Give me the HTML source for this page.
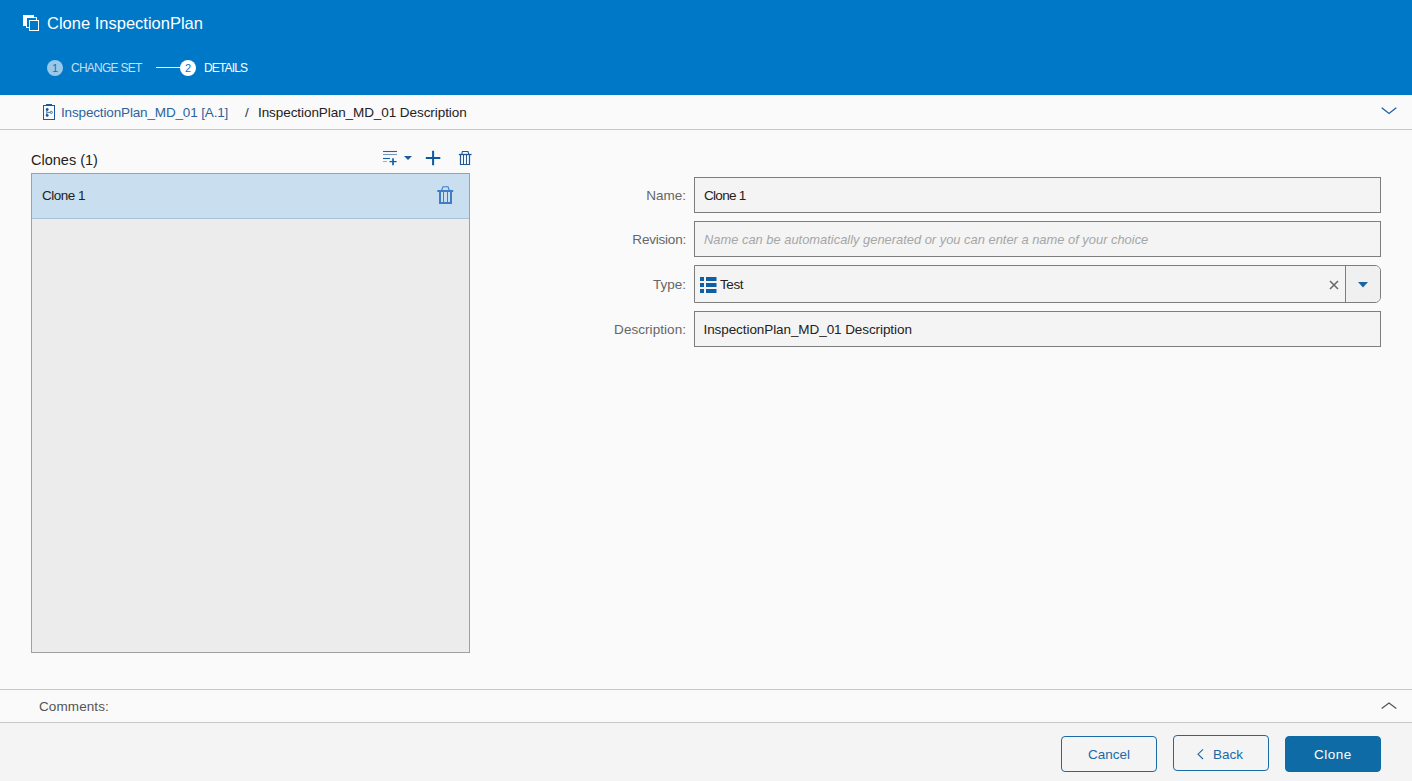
<!DOCTYPE html>
<html><head><meta charset="utf-8">
<style>
*{box-sizing:border-box;margin:0;padding:0}
html,body{width:1412px;height:781px;overflow:hidden;background:#fafafa;font-family:"Liberation Sans",sans-serif}
.a{position:absolute;white-space:nowrap;line-height:1}
#hdr{position:absolute;left:0;top:0;width:1412px;height:95px;background:#0078c8}
#crumb{position:absolute;left:0;top:95px;width:1412px;height:35px;background:#fafafa;border-bottom:1px solid #c8c8c8}
#list{position:absolute;left:31px;top:173px;width:439px;height:480px;background:#ececec;border:1px solid #a0a0a0}
#sel{position:absolute;left:0;top:0;width:437px;height:45px;background:#c9dfef;border-bottom:1px solid #a9c4da}
.inp{position:absolute;left:694px;width:687px;height:36px;background:#f4f4f4;border:1px solid #7d7d7d}
.lbl{position:absolute;right:726px;font-size:13.5px;color:#666;line-height:1;white-space:nowrap}
#cmt{position:absolute;left:0;top:689px;width:1412px;height:34px;border-top:1px solid #c8c8c8;border-bottom:1px solid #c8c8c8;background:#fafafa}
#ftr{position:absolute;left:0;top:723px;width:1412px;height:58px;background:#f4f4f4}
.btn{position:absolute;top:736px;width:96px;height:36px;border:1px solid #1a6aa6;border-radius:4px;background:#f4f4f4}
</style></head><body>
<div id="hdr">
  <svg class="a" style="left:22px;top:14px" width="19" height="18" viewBox="0 0 19 18">
    <rect x="1" y="1" width="11" height="11" fill="#fff"/>
    <rect x="4.5" y="3.5" width="10" height="10" fill="#0078c8" stroke="#fff" stroke-width="1"/>
    <rect x="7.5" y="6.5" width="9" height="10" fill="#0078c8" stroke="#fff" stroke-width="1"/>
  </svg>
  <div class="a" style="left:47px;top:14.7px;font-size:16.5px;color:#fff">Clone InspectionPlan</div>
  <div class="a" style="left:47px;top:60px;width:16px;height:16px;border-radius:50%;background:rgba(255,255,255,.6)"></div>
  <div class="a" style="left:47px;top:63px;width:16px;font-size:11px;text-align:center;color:#0078c8">1</div>
  <div class="a" style="left:71px;top:62.2px;font-size:12px;letter-spacing:-0.75px;color:rgba(255,255,255,.78)">CHANGE SET</div>
  <div class="a" style="left:156px;top:67px;width:26px;height:1px;background:#fff"></div>
  <div class="a" style="left:180px;top:60px;width:16px;height:16px;border-radius:50%;background:#fff"></div>
  <div class="a" style="left:180px;top:63px;width:16px;font-size:11px;text-align:center;color:#0078c8">2</div>
  <div class="a" style="left:204px;top:61.7px;font-size:12px;letter-spacing:-0.85px;color:#fff">DETAILS</div>
</div>
<div id="crumb">
  <svg class="a" style="left:43px;top:9px" width="13" height="17" viewBox="0 0 13 17">
    <rect x="0.5" y="1.5" width="11" height="14" fill="none" stroke="#1e5a9a" stroke-width="1"/>
    <rect x="3" y="0" width="6" height="1.5" fill="#1e5a9a"/>
    <circle cx="4.2" cy="5.5" r="1.4" fill="#1e5a9a"/><circle cx="4.2" cy="11.4" r="1.4" fill="#1e5a9a"/>
    <path d="M3.8 5.5V11.4M4.2 8.4H7.2" stroke="#1e5a9a" stroke-width="0.8" fill="none"/>
    <circle cx="8.3" cy="8.4" r="1.1" fill="none" stroke="#1e5a9a" stroke-width="0.8"/>
  </svg>
  <div class="a" style="left:61px;top:10.5px;font-size:13.5px;letter-spacing:-0.15px;color:#2a64a0">InspectionPlan_MD_01 [A.1]</div>
  <div class="a" style="left:245px;top:10.5px;font-size:13.5px;color:#333">/</div>
  <div class="a" style="left:258px;top:10.5px;font-size:13.5px;letter-spacing:-0.07px;color:#222">InspectionPlan_MD_01 Description</div>
  <svg class="a" style="left:1381px;top:12px" width="16" height="9" viewBox="0 0 16 9"><path d="M0.7 0.8L8 6.5L15.3 0.8" fill="none" stroke="#1d5fa8" stroke-width="1.3"/></svg>
</div>
<div class="a" style="left:31px;top:153px;font-size:14.5px;color:#222">Clones (1)</div>
<svg class="a" style="left:382px;top:150px" width="32" height="16" viewBox="0 0 32 16">
  <path d="M1 1.5H15" stroke="#3f5797" stroke-width="1.1"/><path d="M1 4.5H15" stroke="#7d93c0" stroke-width="1.1"/><path d="M1 8.5H8" stroke="#1060a8" stroke-width="1.1"/><path d="M1 11.5H5" stroke="#aab0ba" stroke-width="1.1"/><path d="M7.5 11.6H14.6" stroke="#1060a8" stroke-width="1.3"/><path d="M11 8.2V15.2" stroke="#1060a8" stroke-width="1.7"/>
  <path d="M22 6H30L26 10Z" fill="#1e5a9a"/>
</svg>
<svg class="a" style="left:425px;top:150px" width="16" height="16" viewBox="0 0 16 16"><path d="M0.8 8H15.3M8.1 0.8V15.2" fill="none" stroke="#0c58a2" stroke-width="2"/></svg>
<svg class="a" style="left:458px;top:150px" width="15" height="16" viewBox="0 0 15 16">
  <path d="M0.9 4.5H13.6" stroke="#1e5a9a" stroke-width="1.3"/>
  <path d="M3.8 4.2L4.4 1.5H10L10.7 4.2" fill="none" stroke="#1e5a9a" stroke-width="1.1"/>
  <path d="M2.5 4.5V14.5H11.5V4.5" fill="none" stroke="#1e5a9a" stroke-width="1.2"/>
  <path d="M5.5 5V14M8.5 5V14" stroke="#1e5a9a" stroke-width="1"/>
</svg>
<div id="list">
  <div id="sel">
    <div class="a" style="left:10px;top:15px;font-size:13.5px;letter-spacing:-0.5px;color:#222">Clone 1</div>
    <svg class="a" style="left:405px;top:12px" width="17" height="19" viewBox="0 0 17 19">
      <path d="M0.3 5H16.2" stroke="#3f7dc8" stroke-width="2"/>
      <path d="M4.6 4.2L6 0.8H11L12.3 4.2" fill="none" stroke="#3f7dc8" stroke-width="1.1"/>
      <path d="M3 5V17H14V5" fill="none" stroke="#3f7dc8" stroke-width="2"/>
      <path d="M6.5 6V16M10.5 6V16" stroke="#3f7dc8" stroke-width="1"/>
    </svg>
  </div>
</div>

<div class="lbl" style="top:189px">Name:</div>
<div class="inp" style="top:177px"><div class="a" style="left:9px;top:11px;font-size:13.5px;letter-spacing:-0.7px;color:#222">Clone 1</div></div>
<div class="lbl" style="top:233px;letter-spacing:-0.21px">Revision:</div>
<div class="inp" style="top:221px"><div class="a" style="left:9px;top:12px;font-size:12.9px;color:#a6a6a6;font-style:italic">Name can be automatically generated or you can enter a name of your choice</div></div>
<div class="lbl" style="top:278px">Type:</div>
<div class="inp" style="top:265px;height:38px;border-radius:0 6px 6px 0">
  <svg class="a" style="left:5px;top:11px" width="17" height="17" viewBox="0 0 17 17">
    <path d="M0 0H4V4H0ZM6 0H16.5V4H6ZM0 6H4V10H0ZM6 6H16.5V10H6ZM0 12H4V16H0ZM6 12H16.5V16H6Z" fill="#0f5fa5"/>
  </svg>
  <div class="a" style="left:25px;top:12px;font-size:13.5px;letter-spacing:-0.4px;color:#222">Test</div>
  <svg class="a" style="left:633.5px;top:13.5px" width="10" height="10" viewBox="0 0 10 10"><path d="M1 1L9 9M9 1L1 9" stroke="#666" stroke-width="1.5"/></svg>
  <div class="a" style="left:650px;top:0;width:1px;height:36px;background:#7d7d7d"></div>
  <div class="a" style="left:651px;top:0;width:34px;height:36px;background:#f0f0f0;border-radius:0 5px 5px 0"></div>
  <svg class="a" style="left:663px;top:16px" width="10" height="6" viewBox="0 0 10 6"><path d="M0 0H10L5 5.5Z" fill="#1565a8"/></svg>
</div>
<div class="lbl" style="top:323px;letter-spacing:0.05px">Description:</div>
<div class="inp" style="top:311px"><div class="a" style="left:8.5px;top:10.5px;font-size:13.5px;letter-spacing:-0.08px;color:#222">InspectionPlan_MD_01 Description</div></div>

<div id="cmt">
  <div class="a" style="left:39px;top:10px;font-size:13.5px;letter-spacing:0.1px;color:#555">Comments:</div>
  <svg class="a" style="left:1381px;top:12px" width="16" height="9" viewBox="0 0 16 9"><path d="M0.7 6.4L8 0.9L15.3 6.4" fill="none" stroke="#555" stroke-width="1.2"/></svg>
</div>
<div id="ftr"></div>
<div class="btn" style="left:1061px"><div class="a" style="left:0;width:94px;top:11px;text-align:center;font-size:13.5px;color:#1a6aa6">Cancel</div></div>
<div class="btn" style="left:1173px;top:735px"><svg class="a" style="left:23px;top:13px" width="8" height="11" viewBox="0 0 8 11"><path d="M6 0.4L1 5.2L6 10" fill="none" stroke="#1a6aa6" stroke-width="1.1"/></svg><div class="a" style="left:39px;top:12px;font-size:13.5px;letter-spacing:0px;color:#1a6aa6">Back</div></div>
<div class="btn" style="left:1285px;background:#0f6ba6;border-color:#0f6ba6"><div class="a" style="left:0;width:94px;top:11px;text-align:center;font-size:13.5px;letter-spacing:0.5px;color:#fff">Clone</div></div>
</body></html>
